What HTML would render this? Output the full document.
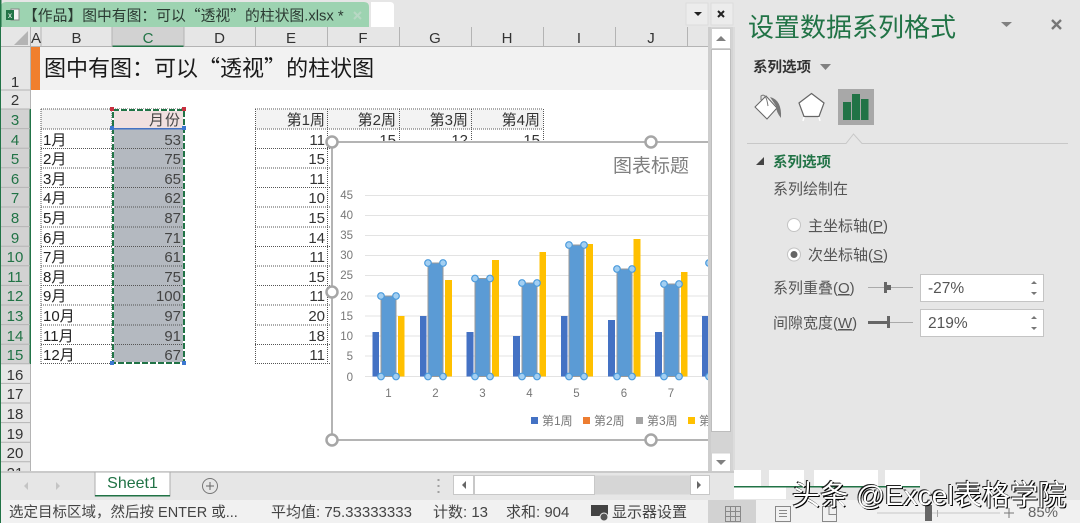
<!DOCTYPE html>
<html><head><meta charset="utf-8"><style>
html,body{margin:0;padding:0;background:#fff;width:1080px;height:523px;overflow:hidden}
svg{display:block;font-family:"Liberation Sans","Noto Sans CJK SC",sans-serif;filter:blur(.3px)}
.q{font-family:"Noto Sans CJK SC",sans-serif}
</style></head><body>
<svg width="1080" height="523" viewBox="0 0 1080 523" xmlns="http://www.w3.org/2000/svg">
<defs><clipPath id="sheet"><rect x="332" y="130" width="376" height="320"/></clipPath>
<clipPath id="rows"><rect x="0" y="47" width="31" height="424"/></clipPath></defs>
<rect width="1080" height="523" fill="#fff"/>
<!-- title bar -->
<rect x="0" y="0" width="735" height="28" fill="#e6e6e6"/>
<path d="M1 27V7Q1 2 6 2H364Q369 2 369 7V27Z" fill="#9dd3b1"/>
<path d="M371 27V2H390Q394 2 394 6V27Z" fill="#fff"/>
<rect x="686" y="3" width="22" height="22" fill="#ececec" stroke="#dcdcdc"/>
<rect x="711" y="3" width="22" height="22" fill="#ececec" stroke="#dcdcdc"/>
<path d="M694 12h8l-4 4z" fill="#222"/>
<path d="M718 11l6 6M724 11l-6 6" stroke="#222" stroke-width="2"/>
<rect x="11" y="9" width="8" height="11" fill="#f4f4f4" stroke="#888"/>
<rect x="6" y="10" width="8" height="10" fill="#217346"/>
<text x="8" y="18" font-size="8" fill="#fff">x</text>
<text x="23" y="20.500" font-size="14.800" fill="#2b3a32">【作品】图中有图：可以<tspan class="q">“</tspan>透视<tspan class="q">”</tspan>的柱状图.xlsx *</text>
<path d="M354 12l7 7M361 12l-7 7" stroke="#b8d8c4" stroke-width="2"/>
<!-- left border -->
<rect x="0" y="0" width="1.500" height="523" fill="#217346"/>
<!-- column headers -->
<rect x="1" y="27" width="707" height="20" fill="#e6e6e6"/>
<rect x="112" y="27" width="72" height="20" fill="#d2d2d2"/>
<rect x="112" y="45.500" width="72" height="1.500" fill="#217346"/>
<path d="M28 31V45H14Z" fill="#b4b4b4"/>
<g stroke="#b4b4b4" stroke-width="1">
<path d="M30.500 27V47M41 27V47M112 27V47M184 27V47M255.500 27V47M327.500 27V47M399.500 27V47M471.500 27V47M543.500 27V47M615.500 27V47M687.500 27V47"/>
<path d="M1 46.500H112M184 46.500H708"/>
</g>
<g font-size="15" fill="#333" text-anchor="middle">
<text x="36" y="43">A</text><text x="76.500" y="43">B</text><text x="148" y="43" fill="#217346">C</text><text x="219.500" y="43">D</text><text x="291" y="43">E</text><text x="363" y="43">F</text><text x="435" y="43">G</text><text x="507" y="43">H</text><text x="579" y="43">I</text><text x="651" y="43">J</text>
</g>
<!-- row headers -->
<rect x="1" y="47" width="29" height="424" fill="#e6e6e6"/>
<rect x="1" y="109" width="29" height="255" fill="#d2d2d2"/>
<rect x="29.500" y="109" width="1.500" height="255" fill="#217346"/>
<g stroke="#b4b4b4" clip-path="url(#rows)">
<path d="M1 90H30M1 109H30M1 128.600H30M1 148.200H30M1 167.800H30M1 187.400H30M1 207H30M1 226.600H30M1 246.200H30M1 265.800H30M1 285.400H30M1 305H30M1 324.600H30M1 344.200H30M1 363.800H30M1 383.400H30M1 403H30M1 422.600H30M1 442.200H30M1 461.800H30M30.500 47V109M30.500 364V471"/>
</g>
<g font-size="15" text-anchor="middle" fill="#333" clip-path="url(#rows)">
<text x="15" y="87">1</text><text x="15" y="105">2</text>
<g fill="#217346"><text x="15" y="125">3</text><text x="15" y="145">4</text><text x="15" y="164">5</text><text x="15" y="184">6</text><text x="15" y="203">7</text><text x="15" y="223">8</text><text x="15" y="243">9</text><text x="15" y="262">10</text><text x="15" y="282">11</text><text x="15" y="301">12</text><text x="15" y="321">13</text><text x="15" y="341">14</text><text x="15" y="360">15</text></g>
<text x="15" y="380">16</text><text x="15" y="399">17</text><text x="15" y="419">18</text><text x="15" y="439">19</text><text x="15" y="458">20</text><text x="15" y="478">21</text>
</g>
<!-- row 1 -->
<rect x="40" y="47" width="668" height="43" fill="#f2f2f2"/>
<rect x="31" y="47" width="9" height="43" fill="#f07f2e"/>
<text x="44" y="76" font-size="22" fill="#1a1a1a">图中有图：可以<tspan class="q">“</tspan>透视<tspan class="q">”</tspan>的柱状图</text>
<!-- month table -->
<rect x="41" y="109" width="71" height="20" fill="#f2f2f2"/>
<rect x="112" y="109" width="72" height="20" fill="#f0e0e0"/>
<rect x="112" y="129" width="72" height="235" fill="#b4b9c0"/>
<g stroke="#555" stroke-dasharray="1 1" fill="none">
<path d="M41 109H184M41 129H184M41 148.500H184M41 168H184M41 187.500H184M41 207H184M41 227H184M41 246.500H184M41 266H184M41 285.500H184M41 305H184M41 325H184M41 344.500H184M41 363.500H184M41 109V364M112 109V364"/>
<path d="M255 109H543M255 129H543M255 148.500H332M255 168H332M255 187.500H332M255 207H332M255 227H332M255 246.500H332M255 266H332M255 285.500H332M255 305H332M255 325H332M255 344.500H332M255 363.500H332M255.500 109V364M327.500 109V364M399.500 109V142M471.500 109V142M543.500 109V142"/>
</g>
<rect x="256" y="110" width="287" height="18.500" fill="#f2f2f2" opacity=".9"/>
<g stroke="#555" stroke-dasharray="1 1" fill="none"><path d="M327.500 109V129M399.500 109V129M471.500 109V129"/></g>
<g font-size="15" fill="#222">
<text x="43" y="145">1月</text><text x="43" y="164">2月</text><text x="43" y="184">3月</text><text x="43" y="203">4月</text><text x="43" y="223">5月</text><text x="43" y="243">6月</text><text x="43" y="262">7月</text><text x="43" y="282">8月</text><text x="43" y="301">9月</text><text x="43" y="321">10月</text><text x="43" y="341">11月</text><text x="43" y="360">12月</text>
</g>
<text x="181" y="125" font-size="15" fill="#444" text-anchor="end" letter-spacing="1">月份</text>
<g font-size="15" fill="#444" text-anchor="end">
<text x="181" y="145">53</text><text x="181" y="164">75</text><text x="181" y="184">65</text><text x="181" y="203">62</text><text x="181" y="223">87</text><text x="181" y="243">71</text><text x="181" y="262">61</text><text x="181" y="282">75</text><text x="181" y="301">100</text><text x="181" y="321">97</text><text x="181" y="341">91</text><text x="181" y="360">67</text>
</g>
<g font-size="15" fill="#333" text-anchor="end">
<text x="325" y="125">第1周</text><text x="396" y="125">第2周</text><text x="468" y="125">第3周</text><text x="540" y="125">第4周</text>
<text x="325" y="145">11</text><text x="396" y="145">15</text><text x="468" y="145">12</text><text x="540" y="145">15</text>
<text x="325" y="164">15</text><text x="325" y="184">11</text><text x="325" y="203">10</text><text x="325" y="223">15</text><text x="325" y="243">14</text><text x="325" y="262">11</text><text x="325" y="282">15</text><text x="325" y="301">11</text><text x="325" y="321">20</text><text x="325" y="341">18</text><text x="325" y="360">11</text>
</g>
<!-- selection -->
<rect x="113" y="110" width="71" height="253" fill="none" stroke="#fff" stroke-width="2"/>
<rect x="113" y="110" width="71" height="253" fill="none" stroke="#217346" stroke-width="2" stroke-dasharray="6 2"/>
<rect x="113" y="128" width="71" height="1.500" fill="#4472c4"/>
<rect x="110" y="107" width="4" height="4" fill="#c8303f"/><rect x="182" y="107" width="4" height="4" fill="#c8303f"/>
<rect x="110" y="126" width="4" height="4" fill="#3c78d0"/><rect x="182" y="126" width="4" height="4" fill="#3c78d0"/>
<rect x="110" y="361" width="4" height="4" fill="#3c78d0"/><rect x="182" y="361" width="4" height="4" fill="#3c78d0"/>
<!-- chart -->
<rect x="332" y="142" width="376" height="298" fill="#fff"/>
<path d="M332 142H708M332 142V440M332 440H708" fill="none" stroke="#b4b4b4" stroke-width="2"/>
<text x="613" y="172" font-size="19" fill="#808080">图表标题</text>
<g stroke="#e3e3e3" stroke-width="1">
<path d="M365 195.500H708M365 215.500H708M365 235.500H708M365 255.500H708M365 275.500H708M365 296H708M365 316H708M365 336H708M365 356H708M365 376.500H708"/>
</g>
<g font-size="11.500" fill="#777" text-anchor="end">
<text x="353" y="199">45</text><text x="353" y="219">40</text><text x="353" y="239">35</text><text x="353" y="259">30</text><text x="353" y="279">25</text><text x="353" y="300">20</text><text x="353" y="320">15</text><text x="353" y="340">10</text><text x="353" y="360">5</text><text x="353" y="381">0</text>
</g>
<g font-size="11.500" fill="#777" text-anchor="middle">
<text x="388.500" y="397">1</text><text x="435.500" y="397">2</text><text x="482.500" y="397">3</text><text x="529.500" y="397">4</text><text x="576.500" y="397">5</text><text x="624" y="397">6</text><text x="671" y="397">7</text>
</g>
<g clip-path="url(#sheet)">
<g fill="#4472c4">
<rect x="372.500" y="332" width="6.500" height="44.500"/><rect x="420" y="316" width="6.500" height="60.500"/><rect x="466.500" y="332" width="7" height="44.500"/><rect x="513" y="336" width="7" height="40.500"/><rect x="561" y="316" width="6.500" height="60.500"/><rect x="608" y="320" width="7" height="56.500"/><rect x="655" y="332" width="7" height="44.500"/><rect x="702" y="316" width="7" height="60.500"/>
</g>
<g fill="#ffc000">
<rect x="398" y="316" width="6.500" height="60.500"/><rect x="445" y="280" width="7" height="96.500"/><rect x="492" y="260" width="7" height="116.500"/><rect x="539.500" y="252" width="6.500" height="124.500"/><rect x="586" y="244" width="7" height="132.500"/><rect x="633.500" y="239" width="7" height="137.500"/><rect x="681" y="272" width="6.500" height="104.500"/>
</g>
<g fill="#5b9bd5" stroke="#9a9a9a" stroke-width="1">
<rect x="381" y="296" width="15" height="80.500"/><rect x="428" y="263" width="15" height="113.500"/><rect x="475" y="278.500" width="15" height="98"/><rect x="522" y="283" width="15" height="93.500"/><rect x="569" y="245" width="15" height="131.500"/><rect x="617" y="269" width="15" height="107.500"/><rect x="664" y="284" width="15" height="92.500"/><rect x="711" y="263" width="15" height="113.500"/>
</g>
<g fill="#a3cff2" stroke="#4c9bdc" stroke-width="1.200">
<circle cx="381" cy="296" r="3.300"/><circle cx="396" cy="296" r="3.300"/><circle cx="381" cy="376.500" r="3.300"/><circle cx="396" cy="376.500" r="3.300"/>
<circle cx="428" cy="263" r="3.300"/><circle cx="443" cy="263" r="3.300"/><circle cx="428" cy="376.500" r="3.300"/><circle cx="443" cy="376.500" r="3.300"/>
<circle cx="475" cy="278.500" r="3.300"/><circle cx="490" cy="278.500" r="3.300"/><circle cx="475" cy="376.500" r="3.300"/><circle cx="490" cy="376.500" r="3.300"/>
<circle cx="522" cy="283" r="3.300"/><circle cx="537" cy="283" r="3.300"/><circle cx="522" cy="376.500" r="3.300"/><circle cx="537" cy="376.500" r="3.300"/>
<circle cx="569" cy="245" r="3.300"/><circle cx="584" cy="245" r="3.300"/><circle cx="569" cy="376.500" r="3.300"/><circle cx="584" cy="376.500" r="3.300"/>
<circle cx="617" cy="269" r="3.300"/><circle cx="632" cy="269" r="3.300"/><circle cx="617" cy="376.500" r="3.300"/><circle cx="632" cy="376.500" r="3.300"/>
<circle cx="664" cy="284" r="3.300"/><circle cx="679" cy="284" r="3.300"/><circle cx="664" cy="376.500" r="3.300"/><circle cx="679" cy="376.500" r="3.300"/>
<circle cx="709" cy="263" r="3.300"/><circle cx="709" cy="376.500" r="3.300"/>
</g>
<rect x="531" y="417" width="7" height="7" fill="#4472c4"/><rect x="583" y="417" width="7" height="7" fill="#ed7d31"/><rect x="636" y="417" width="7" height="7" fill="#a5a5a5"/><rect x="688" y="417" width="7" height="7" fill="#ffc000"/>
<g font-size="12" fill="#777"><text x="542" y="425">第1周</text><text x="594" y="425">第2周</text><text x="647" y="425">第3周</text><text x="699" y="425">第4周</text></g>
</g>
<g fill="#fff" stroke="#a6a6a6" stroke-width="2.500">
<circle cx="332" cy="142" r="5.500"/><circle cx="651" cy="142" r="5.500"/><circle cx="332" cy="292" r="5.500"/><circle cx="332" cy="440" r="5.500"/><circle cx="651" cy="440" r="5.500"/>
</g>
<!-- vertical scroll -->
<rect x="708" y="27" width="27" height="445" fill="#d4d4d4"/>
<rect x="708" y="27" width="3" height="445" fill="#cdcdcd"/>
<rect x="733" y="27" width="2" height="445" fill="#dcdcdc"/>
<rect x="711.500" y="49.500" width="19" height="382" fill="#fff" stroke="#bdbdbd"/>
<rect x="711.500" y="28.500" width="19" height="20" fill="#fff" stroke="#d0d0d0"/>
<rect x="711.500" y="453" width="19" height="19" fill="#fff" stroke="#d0d0d0"/>
<path d="M716 41l5-5 5 5z" fill="#808080"/><path d="M716 460l5 5 5-5z" fill="#808080"/>
<!-- sheet tabs bar -->
<rect x="1" y="471" width="734" height="29" fill="#e6e6e6"/>
<rect x="1" y="471.500" width="734" height="1" fill="#adadad"/>
<rect x="95" y="472" width="75" height="24" fill="#fff" stroke="#adadad"/>
<rect x="95" y="495" width="75" height="1.500" fill="#217346"/>
<text x="132.500" y="488" font-size="16" fill="#217346" text-anchor="middle">Sheet1</text>
<path d="M24 486l4-4v8zM56 482l4 4-4 4z" fill="#c4c4c4"/>
<circle cx="210" cy="486" r="7.500" fill="none" stroke="#777"/>
<path d="M206 486h8M210 482v8" stroke="#666"/>
<path d="M438.500 479v2M438.500 485v2M438.500 491v2" stroke="#a0a0a0" stroke-width="2"/>
<rect x="453.500" y="475.500" width="237" height="19" fill="#d6d6d6"/>
<rect x="453.500" y="475.500" width="20" height="19" fill="#fff" stroke="#c8c8c8"/>
<rect x="474.500" y="475.500" width="120" height="19" fill="#fff" stroke="#c8c8c8"/>
<rect x="690.500" y="475.500" width="19" height="19" fill="#fff" stroke="#c8c8c8"/>
<path d="M466 481v8l-4-4zM697 481v8l4-4z" fill="#666"/>
<!-- status bar -->
<rect x="1" y="500" width="1079" height="23" fill="#f1f1f1"/>
<rect x="708" y="500" width="48" height="23" fill="#d2d2d2"/>
<g font-size="15" fill="#444">
<text x="9" y="517" font-size="14.500">选定目标区域，然后按 ENTER 或...</text>
<text x="271" y="517">平均值: 75.33333333</text>
<text x="433" y="517">计数: 13</text>
<text x="506" y="517">求和: 904</text>
<text x="612" y="517">显示器设置</text>
<text x="1028" y="517" fill="#666">85%</text>
</g>
<rect x="591" y="505" width="17" height="11" fill="#444"/>
<circle cx="604" cy="517" r="4" fill="#555" stroke="#f1f1f1"/>
<g fill="none" stroke="#888">
<path d="M725.500 506.500h15v15h-15zM725.500 511.500h15M725.500 516.500h15M730.500 506.500v15M735.500 506.500v15"/>
<path d="M775.500 506.500h15v15h-15zM779 510.500h8M779 513.500h8M779 516.500h8"/>
<path d="M822.500 506.500h14v15h-14zM829 506.500v8h7"/>
</g>
<path d="M877 513H1000" stroke="#c8c8c8"/><rect x="925" y="505" width="7" height="16" fill="#666"/>
<path d="M937.500 510v7" stroke="#aaa"/>
<path d="M1004 513h10M1009 508v10" stroke="#777"/>
<!-- pane -->
<rect x="735" y="0" width="345" height="470" fill="#e6e6e6"/>
<rect x="735" y="470" width="345" height="30" fill="#e6e6e6"/>
<text x="748" y="36.500" font-size="26" fill="#217346">设置数据系列格式</text>
<path d="M1001 22h11l-5.500 5z" fill="#808080"/>
<path d="M1052 20l9 9M1061 20l-9 9" stroke="#777" stroke-width="2.400"/>
<text x="753" y="72" font-size="14.500" font-weight="bold" fill="#333">系列选项</text>
<path d="M820 64h11l-5.500 6z" fill="#808080"/>
<!-- pane icons -->
<path d="M755 107L766 96L777 108L767 119Z" fill="#fff" stroke="#666"/>
<path d="M761 100V96Q766 92 768 106" fill="none" stroke="#777"/>
<path d="M770 97Q782 100 781 118Q776 112 776 106Z" fill="#777"/>
<path d="M811.500 93.500L824 103L819 116.500H804L799 103Z" fill="#fff" stroke="#666" stroke-width="1.200"/>
<path d="M804 117l-1 4M819 117l1 4" stroke="#fff" stroke-width="1.500"/>
<rect x="838" y="89" width="36" height="36" fill="#a8a8a8"/>
<rect x="843" y="102" width="8" height="18" fill="#217346"/><rect x="852" y="94" width="8" height="26" fill="#217346"/><rect x="861" y="99" width="7.500" height="21" fill="#217346"/>
<path d="M747 143.500H846L853.500 134L862 143.500H1068" fill="none" stroke="#c8c8c8"/>
<path d="M764 157v8h-8z" fill="#444"/>
<text x="773" y="167" font-size="14.500" font-weight="bold" fill="#217346">系列选项</text>
<g font-size="15" fill="#555">
<text x="773" y="194">系列绘制在</text>
<text x="808" y="231">主坐标轴(<tspan text-decoration="underline">P</tspan>)</text>
<text x="808" y="260">次坐标轴(<tspan text-decoration="underline">S</tspan>)</text>
<text x="773" y="293">系列重叠(<tspan text-decoration="underline">O</tspan>)</text>
<text x="773" y="328">间隙宽度(<tspan text-decoration="underline">W</tspan>)</text>
</g>
<circle cx="794" cy="225" r="6.500" fill="#fff" stroke="#c4c4c4"/>
<circle cx="794" cy="254.500" r="6.500" fill="#fff" stroke="#c4c4c4"/><circle cx="794" cy="254.500" r="3.500" fill="#666"/>
<path d="M868 287.500H913" stroke="#aaa"/><rect x="884" y="282" width="3" height="11" fill="#666"/><rect x="887" y="285" width="4" height="5" fill="#666"/>
<path d="M868 322.500H913" stroke="#aaa"/><rect x="868" y="321" width="20" height="3" fill="#666"/><rect x="887" y="316" width="3" height="12" fill="#666"/>
<rect x="920.500" y="274.500" width="123" height="27" fill="#fff" stroke="#c4c4c4"/>
<rect x="920.500" y="309.500" width="123" height="27" fill="#fff" stroke="#c4c4c4"/>
<g font-size="15.500" fill="#555"><text x="928" y="293">-27%</text><text x="928" y="328">219%</text></g>
<path d="M1031 284l3-3 3 3zM1031 292l3 3 3-3zM1031 319l3-3 3 3zM1031 327l3 3 3-3z" fill="#777"/>
<!-- bottom strip -->
<g fill="#fff"><rect x="734" y="470" width="27" height="16"/><rect x="769" y="470" width="35" height="16"/><rect x="814" y="470" width="64" height="16"/><rect x="885" y="470" width="35" height="16"/><rect x="734" y="487" width="52" height="12"/></g>
<rect x="734" y="486" width="186" height="1.500" fill="#217346"/>
<!-- watermark -->
<text x="792" y="505" font-size="28.200" fill="#fff" style="filter:drop-shadow(1px 1px 0 #000) drop-shadow(-.5px -.5px 0 #222)">头条 @Excel表格学院</text>
</svg>
</body></html>
